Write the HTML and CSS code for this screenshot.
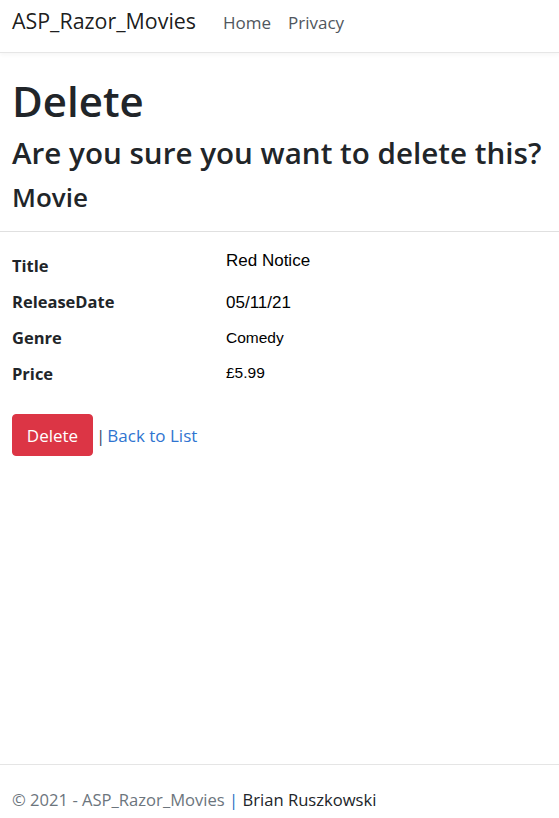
FILE: index.html
```html
<!DOCTYPE html>
<html lang="en">
<head>
<meta charset="utf-8">
<title>Delete - ASP_Razor_Movies</title>
<link rel="stylesheet" href="styles.css">
</head>
<body>
<header class="navbar">
  <a class="brand" href="#">ASP_Razor_Movies</a>
  <nav class="nav">
    <a class="nav-link" href="#">Home</a>
    <a class="nav-link" href="#">Privacy</a>
  </nav>
</header>
<main class="main">
  <h1 class="h1">Delete</h1>
  <h3 class="h2">Are you sure you want to delete this?</h3>
  <div class="details">
    <h4 class="h3">Movie</h4>
    <hr class="rule">
    <dl class="dl">
      <dt class="dt">Title</dt>
      <dd class="dd v1">Red Notice</dd>
      <dt class="dt">ReleaseDate</dt>
      <dd class="dd v2">05/11/21</dd>
      <dt class="dt">Genre</dt>
      <dd class="dd v3">Comedy</dd>
      <dt class="dt">Price</dt>
      <dd class="dd v4">£5.99</dd>
    </dl>
    <form class="actions">
      <button type="button" class="btn-danger">Delete</button>
      <span class="sep">|</span>
      <a class="link" href="#">Back to List</a>
    </form>
  </div>
</main>
<footer class="footer">
  <span class="muted">© 2021 - ASP_Razor_Movies </span><span class="sep2">|</span><span class="author"> Brian Ruszkowski</span>
</footer>
</body>
</html>
```
FILE: styles.css
```css
html, body {
  margin: 0;
  padding: 0;
}
body {
  font-family: "Open Sans", "Noto Sans", sans-serif;
  color: #212529;
  background: #fff;
  display: flex;
  flex-direction: column;
  min-height: 818px;
}
a { text-decoration: none; }
.navbar {
  height: 53px;
  box-sizing: border-box;
  display: flex;
  align-items: baseline;
  padding: 6px 12px 0;
  border-bottom: 1px solid #e6e6e6;
  box-shadow: 0 2px 4px rgba(0,0,0,.04);
}
.brand {
  font-size: 21.4px;
  line-height: 30px;
  color: rgba(0,0,0,.9);
}
.nav {
  display: flex;
  gap: 17px;
  margin-left: 27px;
}
.nav-link {
  font-size: 17px;
  color: #50565d;
}
.main {
  flex: 1;
  padding: 0 12px;
}
.h1 {
  font-size: 42px;
  font-weight: 600;
  margin: 23px 0 0;
  line-height: 1.2;
}
.h2 {
  font-size: 29.6px;
  font-weight: 600;
  margin: 9px 0 0;
  line-height: 1.2;
}
.h3 {
  font-size: 26px;
  font-weight: 600;
  margin: 11px 0 0;
  line-height: 1.2;
}
.rule {
  margin: 18px -12px 0;
  border: 0;
  border-top: 1px solid #e0e0e0;
}
.dl {
  display: grid;
  grid-template-columns: 214px 1fr;
  margin: 22px 0 0;
}
.dt {
  font-weight: 700;
  font-size: 16.5px;
  height: 36px;
  line-height: 24px;
}
.dd {
  margin: 0;
  font-family: "Liberation Sans", Arial, sans-serif;
  color: #000;
  height: 36px;
  box-sizing: border-box;
}
.v1 { font-size: 17px; line-height: 14px; }
.v2 { font-size: 17px; line-height: 24px; padding-top: 1px; }
.v3 { font-size: 15.5px; line-height: 24px; }
.v4 { font-size: 15.5px; line-height: 22px; }
.actions {
  display: flex;
  align-items: center;
  margin-top: 16px;
  font-size: 17px;
}
.btn-danger {
  font-family: inherit;
  font-size: 17px;
  color: #fff;
  background: #dc3545;
  border: 1px solid #dc3545;
  border-radius: 4px;
  width: 81px;
  height: 42px;
  padding: 0;
}
.sep {
  margin: 0 2px 0 3px;
  color: #3a4a66;
}
.link {
  color: #2f74d0;
}
.footer {
  height: 54px;
  border-top: 1px solid #e5e5e5;
  padding: 16px 12px 0;
  display: flex;
  align-items: center;
  box-sizing: border-box;
  font-size: 16.6px;
}
.muted { color: #6c757d; white-space: pre; }
.sep2 { color: #1b6ec2; }
.author { color: #212529; white-space: pre; }
```
